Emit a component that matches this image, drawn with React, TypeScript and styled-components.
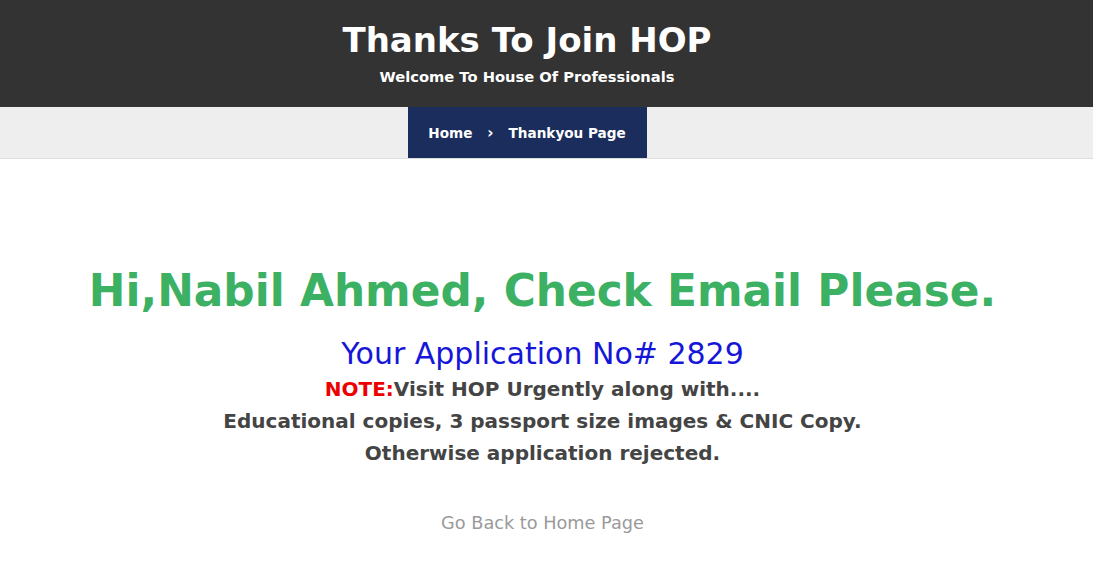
import React from 'react';
import styled, { createGlobalStyle } from 'styled-components';

const GlobalStyle = createGlobalStyle`
  body {
    margin: 0;
    background: #fff;
    font-family: 'DejaVu Sans', 'Open Sans', sans-serif;
  }
`;

const Banner = styled.header`
  background-color: #333333;
  height: 107px;
  display: flex;
  flex-direction: column;
  align-items: center;
  padding: 18px 39px 0 0;
  box-sizing: border-box;
  color: #fff;
`;

const BannerTitle = styled.h1`
  margin: 0;
  font-size: 34px;
  font-weight: 700;
  line-height: 44px;
`;

const BannerSubtitle = styled.p`
  margin: 6px 0 0;
  font-size: 14.7px;
  font-weight: 700;
`;

const CrumbBar = styled.nav`
  background-color: #eeeeee;
  border-bottom: 1px solid #dddddd;
  display: flex;
  justify-content: center;
  padding-right: 39px;
  height: 51px;
`;

const CrumbBox = styled.ol`
  list-style: none;
  margin: 0;
  padding: 0;
  background-color: #1b2d5c;
  display: flex;
  align-items: center;
  justify-content: center;
  gap: 15px;
  width: 239px;
  color: #fff;
  font-size: 13.6px;
  font-weight: 700;
  white-space: nowrap;
`;

const Crumb = styled.li``;

const Separator = styled.li`
  font-size: 15px;
  line-height: 1;
  padding-top: 1px;
`;

const Main = styled.main`
  display: flex;
  flex-direction: column;
  align-items: center;
  padding: 96px 8px 0 0;
  text-align: center;
`;

const Greeting = styled.h2`
  margin: 0;
  color: #3cb063;
  font-size: 43.8px;
  font-weight: 700;
  line-height: 72px;
`;

const AppNumber = styled.h3`
  margin: 8px 0 0;
  color: #1616d8;
  font-size: 30px;
  font-weight: 400;
  line-height: 38px;
`;

const NoteLine = styled.p`
  margin: 0;
  color: #444444;
  font-size: 20px;
  font-weight: 600;
  line-height: 32px;
`;

const NoteLabel = styled.span`
  color: #ee0000;
`;

const BackLink = styled.a`
  margin-top: 44px;
  color: #9a9a9a;
  font-size: 17.7px;
  text-decoration: none;
`;

export default function App() {
  return (
    <>
      <GlobalStyle />
      <Banner>
        <BannerTitle>Thanks To Join HOP</BannerTitle>
        <BannerSubtitle>Welcome To House Of Professionals</BannerSubtitle>
      </Banner>
      <CrumbBar>
        <CrumbBox>
          <Crumb>Home</Crumb>
          <Separator>›</Separator>
          <Crumb>Thankyou Page</Crumb>
        </CrumbBox>
      </CrumbBar>
      <Main>
        <Greeting>Hi,Nabil Ahmed, Check Email Please.</Greeting>
        <AppNumber>Your Application No# 2829</AppNumber>
        <NoteLine>
          <NoteLabel>NOTE:</NoteLabel>Visit HOP Urgently along with....
        </NoteLine>
        <NoteLine>Educational copies, 3 passport size images &amp; CNIC Copy.</NoteLine>
        <NoteLine>Otherwise application rejected.</NoteLine>
        <BackLink href="#">Go Back to Home Page</BackLink>
      </Main>
    </>
  );
}
